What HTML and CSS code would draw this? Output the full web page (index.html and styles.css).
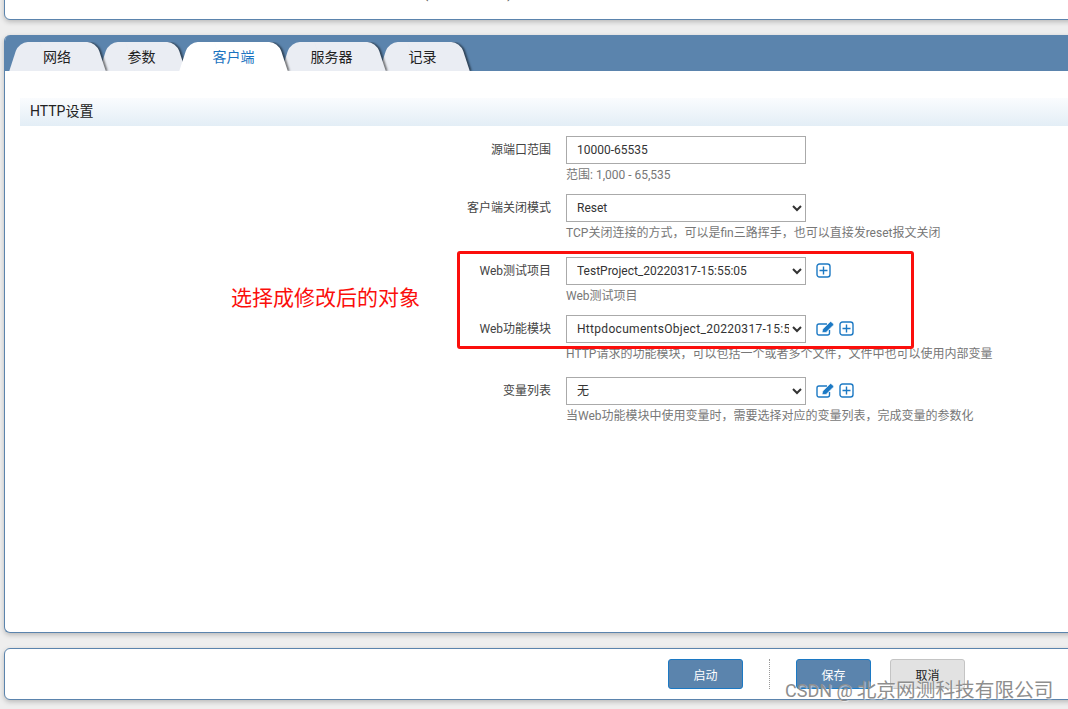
FILE: index.html
```html
<!DOCTYPE html>
<html lang="zh">
<head>
<meta charset="utf-8">
<title>HTTP设置</title>
<link rel="stylesheet" href="styles.css">
</head>
<body>
<div class="page">
  <section class="card top-card"><span class="top-text">(1000-65535)</span></section>
  <section class="card main-card">
    <nav class="tabs">
      <a class="tab t1"><span>网络</span></a>
      <a class="tab t2"><span>参数</span></a>
      <a class="tab t3 active"><span>客户端</span></a>
      <a class="tab t4"><span>服务器</span></a>
      <a class="tab t5"><span>记录</span></a>
    </nav>
    <div class="panel">
      <h2 class="section-title">HTTP设置</h2>
      <div class="form">
        <div class="row">
          <label class="label">源端口范围</label>
          <div class="field">
            <div class="control-line"><input class="control" type="text" value="10000-65535"></div>
            <p class="help">范围: 1,000 - 65,535</p>
          </div>
        </div>
        <div class="row extra">
          <label class="label">客户端关闭模式</label>
          <div class="field">
            <div class="control-line"><select class="control"><option>Reset</option></select></div>
            <p class="help">TCP关闭连接的方式，可以是fin三路挥手，也可以直接发reset报文关闭</p>
          </div>
        </div>
        <div class="row">
          <label class="label">Web测试项目</label>
          <div class="field">
            <div class="control-line">
              <select class="control"><option>TestProject_20220317-15:55:05</option></select>
              <svg class="icon first" viewBox="0 0 15 15"><rect x="1" y="1" width="13" height="13" rx="2.5"/><path d="M7.5 3.5v8M3.5 7.5h8"/></svg>
            </div>
            <p class="help">Web测试项目</p>
          </div>
        </div>
        <div class="row tall">
          <label class="label">Web功能模块</label>
          <div class="field">
            <div class="control-line">
              <select class="control wide"><option>HttpdocumentsObject_20220317-15:55:05</option></select>
              <svg class="icon first edit" viewBox="0 0 19 15"><path d="M13.5 9v3a2 2 0 0 1-2 2H3a2 2 0 0 1-2-2V5a2 2 0 0 1 2-2h8"/><path class="fill" d="M6 11.5l.8-3.4 7.2-7.2a1 1 0 0 1 1.4 0l1.9 1.9a1 1 0 0 1 0 1.4l-7.2 7.2z"/></svg>
              <svg class="icon" viewBox="0 0 15 15"><rect x="1" y="1" width="13" height="13" rx="2.5"/><path d="M7.5 3.5v8M3.5 7.5h8"/></svg>
            </div>
            <p class="help">HTTP请求的功能模块，可以包括一个或者多个文件，文件中也可以使用内部变量</p>
          </div>
        </div>
        <div class="row">
          <label class="label">变量列表</label>
          <div class="field">
            <div class="control-line">
              <select class="control"><option>无</option></select>
              <svg class="icon first edit" viewBox="0 0 19 15"><path d="M13.5 9v3a2 2 0 0 1-2 2H3a2 2 0 0 1-2-2V5a2 2 0 0 1 2-2h8"/><path class="fill" d="M6 11.5l.8-3.4 7.2-7.2a1 1 0 0 1 1.4 0l1.9 1.9a1 1 0 0 1 0 1.4l-7.2 7.2z"/></svg>
              <svg class="icon" viewBox="0 0 15 15"><rect x="1" y="1" width="13" height="13" rx="2.5"/><path d="M7.5 3.5v8M3.5 7.5h8"/></svg>
            </div>
            <p class="help">当Web功能模块中使用变量时，需要选择对应的变量列表，完成变量的参数化</p>
          </div>
        </div>
      </div>
    </div>
  </section>
  <section class="card action-card">
    <button class="btn primary">启动</button>
    <span class="divider"></span>
    <button class="btn primary">保存</button>
    <button class="btn plain">取消</button>
  </section>
</div>
<div class="note-box"></div>
<div class="note-text">选择成修改后的对象</div>
<div class="watermark">CSDN @<span class="wm-cjk">北京网测科技有限公司</span></div>
</body>
</html>
```
FILE: styles.css
```css
* { box-sizing: border-box; }
html, body { margin: 0; height: 709px; overflow: hidden; }
body {
  background: #eeeeee;
  font-family: Roboto, "Noto Sans CJK SC", sans-serif;
  font-size: 12px;
  color: #333;
  position: relative;
}
.page {
  display: flex;
  flex-direction: column;
  gap: 15px;
  padding-left: 4px;
  margin-top: -20px;
  width: 1090px;
}
.card {
  background: #fff;
  border: 1px solid #5b84ad;
  border-radius: 6px;
  box-shadow: 0 2px 5px rgba(0,0,0,.22);
}
.top-card {
  height: 40px;
  display: flex;
  justify-content: center;
  padding-top: 4px;
}
.top-text { position: relative; left: -79px; color: #555; font-size: 14px; letter-spacing: .4px; }
.main-card {
  height: 598px;
  overflow: hidden;
  border-top: 0;
  border-right: 0;
}
.tabs {
  height: 36px;
  background: #5b84ad;
  display: flex;
  align-items: flex-end;
  padding-left: 6px;
  margin-left: -1px;
}
.tab {
  position: relative;
  height: 29px;
  display: flex;
  align-items: center;
  justify-content: center;
  padding-bottom: 2px;
  font-size: 14px;
  color: #222;
  margin-right: -5px;
}
.tab span { position: relative; z-index: 1; }
.tab::before, .tab::after {
  content: "";
  position: absolute;
  top: 0;
  bottom: 0;
  width: 60%;
  background: #eaedf3;
}
.tab::before {
  left: 4px;
  border-top-left-radius: 9px;
  transform: skewX(-18deg);
}
.tab::after {
  right: 4px;
  border-top-right-radius: 9px;
  transform: skewX(18deg);
  box-shadow: 2px 0 2px rgba(0,0,0,.5);
  clip-path: inset(0 -5px 0 0);
}
.t1 { width: 95px; z-index: 5; padding-right: 1px; }
.t2 { width: 85px; z-index: 4; padding-right: 2px; }
.t3 { width: 107px; z-index: 6; }
.t4 { width: 103px; z-index: 3; padding-right: 4px; }
.t5 { width: 89px; z-index: 2; padding-right: 4px; }
.tab.active { color: #1a73c0; }
.tab.active::before, .tab.active::after { background: #fff; }
.panel { padding: 27px 0 0 15px; }
.section-title {
  margin: 0;
  height: 28px;
  line-height: 27px;
  font-size: 14px;
  font-weight: 400;
  color: #222;
  padding-left: 10px;
  background: linear-gradient(#fafcfe, #e3eef6);
}
.form { padding-top: 10px; }
.row { display: flex; height: 58px; }
.row.extra { height: 63px; }
.row.tall { height: 62px; }
.label {
  width: 531px;
  text-align: right;
  padding-top: 6px;
  line-height: 16px;
  color: #444;
}
.field { margin-left: 15px; }
.control-line { display: flex; align-items: center; height: 28px; }
.control {
  width: 240px;
  height: 28px;
  border: 1px solid #aaa;
  background: #fff;
  border-radius: 0;
  font: inherit;
  color: #333;
  padding: 0 0 0 10px;
  outline: 0;
}
select.control { padding-left: 6px; }
select.wide { letter-spacing: .3px; }
.help {
  margin: 1px 0 0;
  line-height: 20px;
  color: #777;
  white-space: nowrap;
}
.icon {
  width: 15px;
  height: 15px;
  margin-left: 4px;
  margin-bottom: 2px;
  fill: none;
  stroke: #1c79c4;
  stroke-width: 1.4;
  flex: none;
}
.icon.first { margin-left: 10px; }
.icon.edit { width: 19px; }
.icon .fill { fill: #1c79c4; stroke: #fff; stroke-width: .6; }
.action-card {
  height: 52px;
  display: flex;
  align-items: flex-start;
  padding: 10px 0 0 663px;
}
.btn {
  width: 75px;
  height: 30px;
  border-radius: 3px;
  font: inherit;
  padding: 0;
}
.btn.primary { background: #5b84ad; border: 1px solid #1c79c4; color: #fff; }
.btn.plain { background: #e2e2e2; border: 1px solid #c4c4c4; color: #222; margin-left: 19px; }
.divider { width: 0; height: 30px; border-left: 1px dotted #999; margin: 0 26px; }
.note-box {
  position: absolute;
  left: 457px;
  top: 251px;
  width: 457px;
  height: 98px;
  border: 3px solid #fb0f0c;
  border-radius: 3px;
}
.note-text {
  position: absolute;
  left: 231px;
  top: 281px;
  font-size: 21px;
  line-height: 30px;
  color: #fb0f0c;
  font-family: "Noto Sans CJK SC", sans-serif;
}
.watermark {
  position: absolute;
  left: 785px;
  top: 678px;
  font-size: 18px;
  line-height: 26px;
  color: #8e8e8e;
  white-space: nowrap;
  text-shadow: 1px 1px 1px rgba(255,255,255,.6);
}
.wm-cjk { font-size: 19.7px; margin-left: 4px; }
```
